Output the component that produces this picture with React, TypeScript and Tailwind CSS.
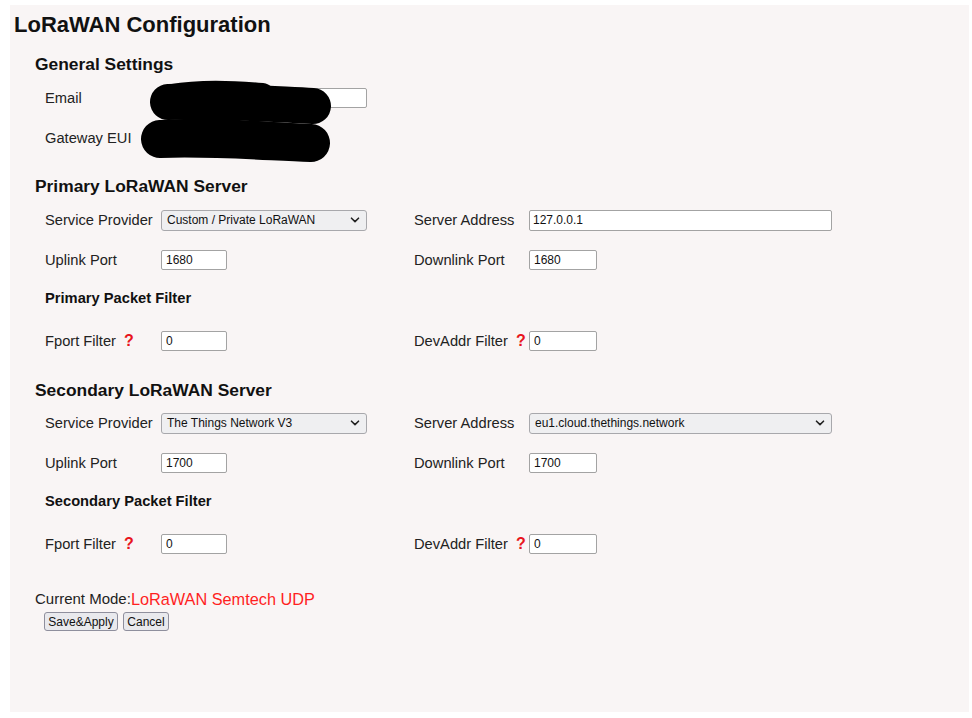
import React from "react";

const LABEL = "text-[14.7px] text-[#222] font-['Liberation_Sans',Arial,sans-serif]";

function TextBox({ value, w }: { value: string; w: string }) {
  return (
    <input
      readOnly
      value={value}
      className={`${w} h-[20px] bg-white border border-[#a3a3a3] rounded-[2px] pl-[4px] text-[12px] text-[#111] font-['Liberation_Sans',Arial,sans-serif] outline-none`}
    />
  );
}

function SelectBox({ value, w }: { value: string; w: string }) {
  return (
    <div
      className={`${w} h-[21px] bg-[#efeff1] border border-[#a8a8ac] rounded-[3px] pl-[5px] pr-[6px] flex items-center justify-between text-[12px] text-[#111] font-['Liberation_Sans',Arial,sans-serif]`}
    >
      <span>{value}</span>
      <svg width="10" height="6" viewBox="0 0 10 6" className="shrink-0">
        <path d="M1.5 1.2 L5 4.6 L8.5 1.2" fill="none" stroke="#222" strokeWidth="1.6" strokeLinecap="round" strokeLinejoin="round" />
      </svg>
    </div>
  );
}

function Help() {
  return <span className="ml-[8px] text-[16px] font-bold text-[#e8141c] font-['Liberation_Sans',Arial,sans-serif] leading-none">?</span>;
}

function ServerSection({
  title,
  mtTitle,
  provider,
  address,
  addressIsSelect,
  port,
  filterTitle,
  mts,
}: {
  title: string;
  mtTitle: string;
  provider: string;
  address: string;
  addressIsSelect: boolean;
  port: string;
  filterTitle: string;
  mts: [string, string, string, string];
}) {
  return (
    <>
      <div className={`${mtTitle} h-[22px] flex items-center pl-[25px]`}>
        <span className="text-[17.4px] font-bold text-[#111] font-['Liberation_Sans',Arial,sans-serif]">{title}</span>
      </div>
      <div className={`${mts[0]} h-[22px] flex items-center pl-[35px]`}>
        <div className="w-[369px] flex items-center">
          <span className={`w-[116px] ${LABEL}`}>Service Provider</span>
          <SelectBox value={provider} w="w-[206px]" />
        </div>
        <div className="flex items-center">
          <span className={`w-[115px] ${LABEL}`}>Server Address</span>
          {addressIsSelect ? (
            <SelectBox value={address} w="w-[303px]" />
          ) : (
            <input
              readOnly
              value={address}
              className="w-[303px] h-[21px] bg-white border border-[#a3a3a3] rounded-[2px] pl-[3px] text-[12px] text-[#111] font-['Liberation_Sans',Arial,sans-serif] outline-none"
            />
          )}
        </div>
      </div>
      <div className={`${mts[1]} h-[22px] flex items-center pl-[35px]`}>
        <div className="w-[369px] flex items-center">
          <span className={`w-[116px] ${LABEL}`}>Uplink Port</span>
          <TextBox value={port} w="w-[66px]" />
        </div>
        <div className="flex items-center">
          <span className={`w-[115px] ${LABEL}`}>Downlink Port</span>
          <TextBox value={port} w="w-[68px]" />
        </div>
      </div>
      <div className={`${mts[2]} h-[22px] flex items-center pl-[35px]`}>
        <span className="text-[14.7px] font-bold text-[#111] font-['Liberation_Sans',Arial,sans-serif]">{filterTitle}</span>
      </div>
      <div className={`${mts[3]} h-[22px] flex items-center pl-[35px]`}>
        <div className="w-[369px] flex items-center">
          <span className={`w-[116px] flex items-center ${LABEL}`}>
            Fport Filter
            <Help />
          </span>
          <TextBox value="0" w="w-[66px]" />
        </div>
        <div className="flex items-center">
          <span className={`w-[115px] flex items-center ${LABEL}`}>
            DevAddr Filter
            <Help />
          </span>
          <TextBox value="0" w="w-[68px]" />
        </div>
      </div>
    </>
  );
}

export default function App() {
  return (
    <div className="relative w-[972px] h-[718px] bg-white pt-[5px] pl-[10px] overflow-hidden">
      <div className="w-[959px] h-[707px] bg-[#f9f5f5] flex flex-col">
        <div className="mt-[4px] h-[30px] flex items-center pl-[4px]">
          <h1 className="text-[22px] font-bold text-[#111] font-['Liberation_Sans',Arial,sans-serif]">LoRaWAN Configuration</h1>
        </div>

        <div className="mt-[14px] h-[22px] flex items-center pl-[25px]">
          <span className="text-[17.4px] font-bold text-[#111] font-['Liberation_Sans',Arial,sans-serif]">General Settings</span>
        </div>
        <div className="mt-[12px] h-[22px] flex items-center pl-[35px]">
          <span className={`w-[116px] ${LABEL}`}>Email</span>
          <TextBox value="" w="w-[206px]" />
        </div>
        <div className="mt-[18px] h-[22px] flex items-center pl-[35px]">
          <span className={`w-[116px] ${LABEL}`}>Gateway EUI</span>
        </div>

        <ServerSection
          title="Primary LoRaWAN Server"
          mtTitle="mt-[26px]"
          provider="Custom / Private LoRaWAN"
          address="127.0.0.1"
          addressIsSelect={false}
          port="1680"
          filterTitle="Primary Packet Filter"
          mts={["mt-[12px]", "mt-[18px]", "mt-[16px]", "mt-[21px]"]}
        />

        <ServerSection
          title="Secondary LoRaWAN Server"
          mtTitle="mt-[27px]"
          provider="The Things Network V3"
          address="eu1.cloud.thethings.network"
          addressIsSelect={true}
          port="1700"
          filterTitle="Secondary Packet Filter"
          mts={["mt-[11px]", "mt-[18px]", "mt-[16px]", "mt-[21px]"]}
        />

        <div className="mt-[33px] h-[22px] flex items-center pl-[25px] font-['Liberation_Sans',Arial,sans-serif]">
          <span className="text-[15px] text-[#222]">Current Mode:</span>
          <span className="text-[16.3px] text-[#ff1f1f]">LoRaWAN Semtech UDP</span>
        </div>
        <div className="mt-[2px] flex items-center gap-[5px] pl-[34px]">
          <button className="h-[19px] w-[74px] bg-[#e9e9ed] border border-[#8f8f9d] rounded-[3px] text-[12px] text-[#111] font-['Liberation_Sans',Arial,sans-serif] flex items-center justify-center">
            Save&amp;Apply
          </button>
          <button className="h-[19px] w-[46px] bg-[#e9e9ed] border border-[#8f8f9d] rounded-[3px] text-[12px] text-[#111] font-['Liberation_Sans',Arial,sans-serif] flex items-center justify-center">
            Cancel
          </button>
        </div>
      </div>

      <svg className="absolute left-0 top-0 pointer-events-none" width="972" height="718" viewBox="0 0 972 718">
        <path d="M168 102 C 220 100, 270 104, 313 106" fill="none" stroke="#000" strokeWidth="36" strokeLinecap="round" />
        <path d="M172 97 C 200 92, 230 93, 262 96" fill="none" stroke="#000" strokeWidth="26" strokeLinecap="round" />
        <path d="M160 139 C 210 137, 260 141, 311 143" fill="none" stroke="#000" strokeWidth="38" strokeLinecap="round" />
        <path d="M165 132 C 190 127, 230 130, 300 135" fill="none" stroke="#000" strokeWidth="22" strokeLinecap="round" />
      </svg>
    </div>
  );
}
